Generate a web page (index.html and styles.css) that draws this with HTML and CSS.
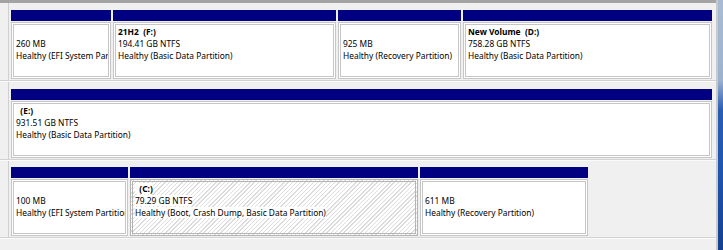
FILE: index.html
```html
<!DOCTYPE html>
<html>
<head>
<meta charset="utf-8">
<link rel="stylesheet" href="styles.css">
</head>
<body>
<div class="window">
  <div class="topbar"></div>
  <div class="row">
    <div class="disklabel"></div>
    <div class="parts">
      <div class="part w100">
        <div class="bar"></div>
        <div class="body"><div class="line"></div><div class="line">260 MB</div><div class="line">Healthy (EFI System Partition)</div></div>
      </div>
      <div class="part w223">
        <div class="bar"></div>
        <div class="body"><div class="line name">21H2&nbsp; (F:)</div><div class="line">194.41 GB NTFS</div><div class="line">Healthy (Basic Data Partition)</div></div>
      </div>
      <div class="part w123">
        <div class="bar"></div>
        <div class="body"><div class="line"></div><div class="line">925 MB</div><div class="line">Healthy (Recovery Partition)</div></div>
      </div>
      <div class="part grow">
        <div class="bar"></div>
        <div class="body"><div class="line name">New Volume&nbsp; (D:)</div><div class="line">758.28 GB NTFS</div><div class="line">Healthy (Basic Data Partition)</div></div>
      </div>
    </div>
  </div>
  <div class="row">
    <div class="disklabel"></div>
    <div class="parts">
      <div class="part grow">
        <div class="bar"></div>
        <div class="body"><div class="line name">&nbsp;&nbsp;(E:)</div><div class="line">931.51 GB NTFS</div><div class="line">Healthy (Basic Data Partition)</div></div>
      </div>
    </div>
  </div>
  <div class="row last">
    <div class="disklabel"></div>
    <div class="parts short">
      <div class="part w117">
        <div class="bar"></div>
        <div class="body"><div class="line"></div><div class="line">100 MB</div><div class="line">Healthy (EFI System Partition)</div></div>
      </div>
      <div class="part w288 selected">
        <div class="bar"></div>
        <div class="body"><div class="line name"><span>&nbsp;&nbsp;(C:)</span></div><div class="line"><span>79.29 GB NTFS</span></div><div class="line"><span>Healthy (Boot, Crash Dump, Basic Data Partition)</span></div></div>
      </div>
      <div class="part w168">
        <div class="bar"></div>
        <div class="body"><div class="line"></div><div class="line">611 MB</div><div class="line">Healthy (Recovery Partition)</div></div>
      </div>
    </div>
  </div>
  <div class="rest"></div>
</div>
<div class="desktop"></div>
</body>
</html>
```

FILE: styles.css
```css
html, body {
  margin: 0;
  padding: 0;
}
body {
  width: 723px;
  height: 250px;
  overflow: hidden;
  display: flex;
  background: #f0f0f0;
  font-family: "Segoe UI", "Noto Sans", "Liberation Sans", sans-serif;
  font-size: 8.4px;
  color: #000;
}
.window {
  width: 716px;
  border-right: 2px solid #c9c9c9;
  display: flex;
  flex-direction: column;
  background: #f0f0f0;
}
.desktop {
  flex: 1;
  background: linear-gradient(180deg, #a9bcd4 0px, #9cb2d0 80px, #2a5db4 110px, #1f55b0 170px, #163f8f 250px);
}
.topbar {
  height: 3px;
  background: #a3a3a3;
}
.row {
  display: flex;
  height: 77px;
  border-bottom: 1px solid #d2d2d2;
  box-shadow: 0 1px 0 #fbfbfb;
  margin-bottom: 1px;
}
.row.last {
  height: 76px;
}
.row.last .parts {
  padding-top: 6px;
}
.disklabel {
  width: 8px;
  border-right: 1px solid #d0d0d0;
}
.parts {
  flex: 1;
  display: flex;
  gap: 2px;
  padding: 7px 4px 1px 2px;
}
.parts.short .part { flex: none; }
.part {
  display: flex;
  flex-direction: column;
  background: #f0f0f0;
  min-width: 0;
}
.w100 { width: 100px; }
.w223 { width: 223px; }
.w123 { width: 123px; }
.w117 { width: 117px; }
.w288 { width: 288px; }
.w168 { width: 168px; }
.grow { flex: 1; }
.bar {
  height: 11px;
  background: #000080;
  border-bottom: 1px solid #f0f0f0;
}
.body {
  flex: 1;
  border: 3px double #c6c6c6;
  background: #fff;
  padding: 1px 0 0 2px;
  overflow: hidden;
  white-space: nowrap;
}
.line {
  height: 12px;
  line-height: 12px;
}
.name {
  font-weight: bold;
}
.selected .body {
  border-color: #b4b4b4;
  background: repeating-linear-gradient(135deg, #ffffff 0 1.5px, #dcdcdc 1.5px 2.5px, #ffffff 2.5px 3px);
}
.selected .line span {
  background: #fff;
}
.rest {
  flex: 1;
}
```
